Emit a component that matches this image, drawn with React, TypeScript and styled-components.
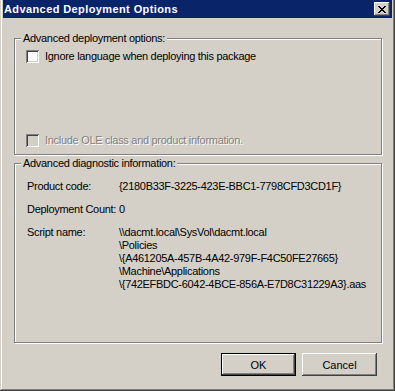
import { FC } from "react";
import styled, { createGlobalStyle } from "styled-components";

const GlobalStyle = createGlobalStyle`
	html, body {
		margin: 0;
		padding: 0;
		background: #d4d0c8;
	}
	* {
		box-sizing: border-box;
	}
`;

const StyledWindow = styled.div`
	width: 395px;
	height: 391px;
	display: flex;
	flex-direction: column;
	padding: 0 3px 3px 3px;
	background: #d4d0c8;
	box-shadow: inset -1px -1px 0 #404040, inset 1px 0 0 #d4d0c8,
		inset -2px -2px 0 #808080, inset 2px 0 0 #ffffff;
	font-family: "Liberation Sans", Arial, sans-serif;
	font-size: 11px;
	letter-spacing: -0.3px;
	color: #000000;
`;

const StyledTitleBar = styled.div`
	height: 18px;
	display: flex;
	align-items: center;
	justify-content: space-between;
	padding: 0 2px 0 1px;
	background: #0a246a;
	color: #ffffff;
	font-weight: bold;
	font-size: 11px;
	letter-spacing: 0.4px;
`;

const StyledTitleText = styled.span`
	line-height: 18px;
	white-space: nowrap;
`;

const StyledCloseButton = styled.button`
	width: 16px;
	height: 14px;
	padding: 0;
	border: none;
	display: flex;
	align-items: center;
	justify-content: center;
	background: #d4d0c8;
	box-shadow: inset -1px -1px 0 #404040, inset 1px 1px 0 #ffffff,
		inset -2px -2px 0 #808080, inset 2px 2px 0 #d4d0c8;
`;

const StyledBody = styled.div`
	flex: 1;
	display: flex;
	flex-direction: column;
	padding: 20px 9px 0 11px;
`;

const StyledGroupBox = styled.div<{ $height: number; $gap?: number }>`
	height: ${({ $height }) => $height}px;
	margin-top: ${({ $gap }) => $gap ?? 0}px;
	margin-right: 1px;
	display: flex;
	flex-direction: column;
	border: 1px solid #808080;
	box-shadow: inset 1px 1px 0 #ffffff, 1px 1px 0 #ffffff;
`;

const StyledLegend = styled.div`
	align-self: flex-start;
	margin: -7px 0 0 6px;
	padding: 0 2px;
	line-height: 13px;
	background: #d4d0c8;
	white-space: nowrap;
`;

const StyledCheckRow = styled.label<{ $disabled?: boolean; $top?: number; $bottom?: number }>`
	display: flex;
	align-items: center;
	gap: 6px;
	margin: ${({ $top }) => $top ?? 0}px 0 ${({ $bottom }) => $bottom ?? 0}px 11px;
	line-height: 13px;
	color: ${({ $disabled }) => ($disabled ? "#808080" : "#000000")};
	text-shadow: ${({ $disabled }) =>
		$disabled ? "1px 1px 0 #ffffff" : "none"};
`;

const StyledCheckBox = styled.span<{ $disabled?: boolean }>`
	width: 13px;
	height: 13px;
	flex: none;
	background: ${({ $disabled }) => ($disabled ? "#d4d0c8" : "#ffffff")};
	box-shadow: inset 1px 1px 0 #808080, inset -1px -1px 0 #ffffff,
		inset 2px 2px 0 #404040, inset -2px -2px 0 #d4d0c8;
`;

const StyledSpacer = styled.div`
	flex: 1;
`;

const StyledInfoGrid = styled.div`
	display: grid;
	grid-template-columns: 92px 1fr;
	row-gap: 10px;
	margin: 10px 0 0 12px;
	line-height: 13px;
`;

const StyledInfoLabel = styled.div`
	white-space: nowrap;
`;

const StyledInfoValue = styled.div`
	white-space: nowrap;
`;

const StyledButtonRow = styled.div`
	display: flex;
	justify-content: flex-end;
	gap: 6px;
	margin: 10px 6px 0 0;
`;

const StyledButton = styled.button<{ $default?: boolean }>`
	width: 75px;
	height: 23px;
	padding: 0;
	border: ${({ $default }) => ($default ? "1px solid #000000" : "none")};
	background: #d4d0c8;
	font-family: "Liberation Sans", Arial, sans-serif;
	font-size: 11px;
	color: #000000;
	box-shadow: inset -1px -1px 0 #404040, inset 1px 1px 0 #ffffff,
		inset -2px -2px 0 #808080, inset 2px 2px 0 #d4d0c8;
`;

const CloseGlyph: FC = () => (
	<svg width="8" height="7" viewBox="0 0 8 7" shapeRendering="crispEdges">
		<path
			d="M0 0h2v1h-2zM6 0h2v1h-2zM1 1h2v1h-2zM5 1h2v1h-2zM2 2h4v1h-4zM3 3h2v1h-2zM2 4h4v1h-4zM1 5h2v1h-2zM5 5h2v1h-2zM0 6h2v1h-2zM6 6h2v1h-2z"
			fill="#000000"
		/>
	</svg>
);

const scriptLines = [
	"\\\\dacmt.local\\SysVol\\dacmt.local",
	"\\Policies",
	"\\{A461205A-457B-4A42-979F-F4C50FE27665}",
	"\\Machine\\Applications",
	"\\{742EFBDC-6042-4BCE-856A-E7D8C31229A3}.aas",
];

const App: FC = () => {
	return (
		<>
			<GlobalStyle />
			<StyledWindow>
				<StyledTitleBar>
					<StyledTitleText>Advanced Deployment Options</StyledTitleText>
					<StyledCloseButton aria-label="Close">
						<CloseGlyph />
					</StyledCloseButton>
				</StyledTitleBar>
				<StyledBody>
					<StyledGroupBox $height={117}>
						<StyledLegend>Advanced deployment options:</StyledLegend>
						<StyledCheckRow $top={5}>
							<StyledCheckBox />
							Ignore language when deploying this package
						</StyledCheckRow>
						<StyledSpacer />
						<StyledCheckRow $disabled $bottom={7}>
							<StyledCheckBox $disabled />
							Include OLE class and product information.
						</StyledCheckRow>
					</StyledGroupBox>
					<StyledGroupBox $height={180} $gap={8}>
						<StyledLegend>Advanced diagnostic information:</StyledLegend>
						<StyledInfoGrid>
							<StyledInfoLabel>Product code:</StyledInfoLabel>
							<StyledInfoValue>
								{"{2180B33F-3225-423E-BBC1-7798CFD3CD1F}"}
							</StyledInfoValue>
							<StyledInfoLabel>Deployment Count:</StyledInfoLabel>
							<StyledInfoValue>0</StyledInfoValue>
							<StyledInfoLabel>Script name:</StyledInfoLabel>
							<StyledInfoValue>
								{scriptLines.map((line) => (
									<div key={line}>{line}</div>
								))}
							</StyledInfoValue>
						</StyledInfoGrid>
					</StyledGroupBox>
					<StyledButtonRow>
						<StyledButton $default>OK</StyledButton>
						<StyledButton>Cancel</StyledButton>
					</StyledButtonRow>
				</StyledBody>
			</StyledWindow>
		</>
	);
};

export default App;
